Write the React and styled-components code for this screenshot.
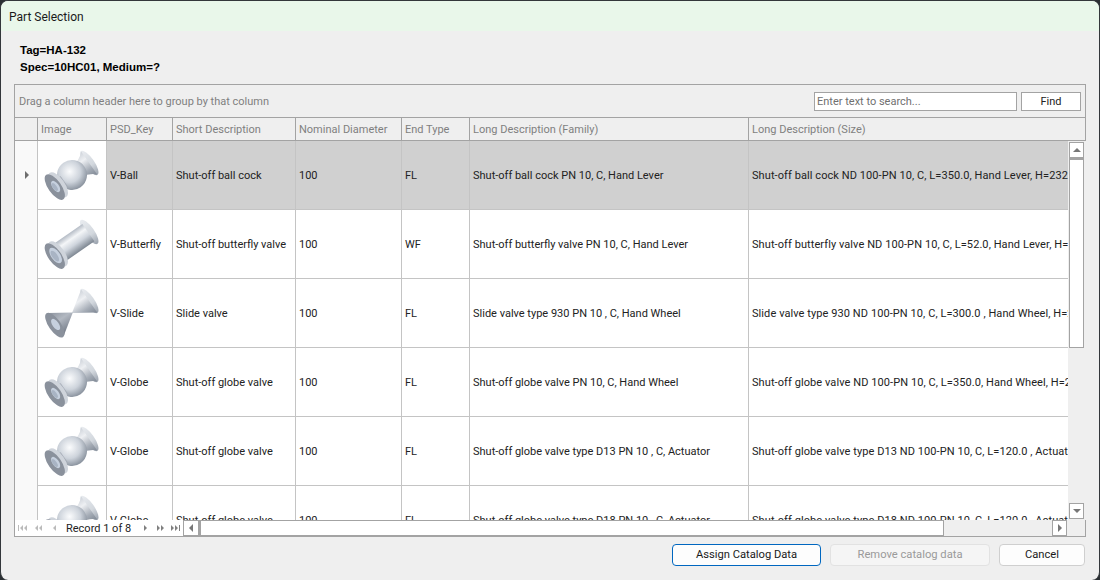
import React from "react"
import styled, { createGlobalStyle } from "styled-components"

const GlobalStyle = createGlobalStyle`
html, body {
  margin: 0;
  padding: 0;
  background: #2b2f33;
}
* { box-sizing: border-box; }
`

const Window = styled.div`
width: 1100px;
height: 580px;
background: #efefef;
border: 1px solid #33373b;
border-bottom: none;
border-radius: 8px;
overflow: hidden;
display: flex;
flex-direction: column;
font-family: Roboto, sans-serif;
font-size: 11px;
color: #222;
`

const TitleBar = styled.div`
height: 30px;
flex: none;
background: #e9f7ea;
display: flex;
align-items: center;
padding: 1px 0 0 8px;
font-size: 12px;
color: #1a1a1a;
`

const Info = styled.div`
flex: none;
height: 53px;
padding: 11px 0 0 19px;
font-family: "Liberation Sans", sans-serif;
font-weight: 700;
font-size: 11.5px;
line-height: 17px;
color: #000;
`

const GridBox = styled.div`
flex: none;
height: 453px;
margin: 0 13px;
border: 1px solid #a3a3a3;
display: flex;
flex-direction: column;
`

const GroupPanel = styled.div`
flex: none;
height: 33px;
border-bottom: 1px solid #a3a3a3;
display: flex;
align-items: center;
padding: 0 4px;
color: #7f7f7f;
`

const GroupHint = styled.span`
flex: 1;
`

const SearchInput = styled.div`
width: 203px;
height: 19px;
background: #fff;
border: 1px solid #a3a3a3;
color: #707070;
line-height: 18px;
padding-left: 2px;
`

const FindButton = styled.div`
width: 60px;
height: 19px;
margin-left: 4px;
background: #fff;
border: 1px solid #a3a3a3;
color: #222;
line-height: 18px;
text-align: center;
`

const columns = "23px 69px 66px 123px 106px 68px 279px 320px"

const HeaderRow = styled.div`
flex: none;
height: 23px;
display: grid;
grid-template-columns: ${columns};
border-bottom: 1px solid #a3a3a3;
color: #7f7f7f;
overflow: hidden;
`

const HeaderCell = styled.div`
border-right: ${({ $last }) => ($last ? "none" : "1px solid #a3a3a3")};
padding-left: 3px;
line-height: 24px;
white-space: nowrap;
`

const GridBody = styled.div`
flex: none;
height: 379px;
display: flex;
`

const Viewport = styled.div`
width: 1053px;
flex: none;
overflow: hidden;
`

const Row = styled.div`
height: 69px;
display: grid;
grid-template-columns: ${columns};
`

const Indicator = styled.div`
background: #f9f9f9;
border-right: 1px solid #c4c4c4;
display: flex;
align-items: center;
justify-content: center;
`

const Arrow = styled.div`
width: 0;
height: 0;
border-left: 4px solid #6e6e6e;
border-top: 4px solid transparent;
border-bottom: 4px solid transparent;
margin: 0 0 2px 1px;
`

const ImageCell = styled.div`
background: #fff;
border-right: 1px solid #c4c4c4;
border-bottom: 1px solid #c4c4c4;
`

const Cell = styled.div`
background: ${({ $selected }) => ($selected ? "#d0d0d0" : "#fff")};
border-right: ${({ $last }) => ($last ? "none" : "1px solid #c4c4c4")};
border-bottom: 1px solid #c4c4c4;
padding-left: 3px;
display: flex;
align-items: center;
white-space: nowrap;
overflow: hidden;
color: #222;
letter-spacing: ${({ $last }) => ($last ? "0.08px" : "0")};
`

const VScroll = styled.div`
flex: 1;
display: flex;
flex-direction: column;
padding: 1px 2px 1px 1px;
background: #efefef;
`

const ScrollBtn = styled.div`
flex: none;
width: ${({ $w }) => $w || 15}px;
height: 16px;
background: #fff;
border: 1px solid #a3a3a3;
display: flex;
align-items: center;
justify-content: center;
`

const VThumb = styled.div`
flex: none;
width: 15px;
height: 190px;
background: #fff;
border: 1px solid #a3a3a3;
border-top-width: 2px;
`

const VTrack = styled.div`
flex: 1;
`

const Tri = styled.div`
width: 0;
height: 0;
${({ $dir }) => $dir === "up" && "border-bottom: 4px solid #777; border-left: 4px solid transparent; border-right: 4px solid transparent;"}
${({ $dir }) => $dir === "down" && "border-top: 4px solid #777; border-left: 4px solid transparent; border-right: 4px solid transparent;"}
${({ $dir }) => $dir === "left" && "border-right: 4px solid #777; border-top: 4px solid transparent; border-bottom: 4px solid transparent;"}
${({ $dir }) => $dir === "right" && "border-left: 4px solid #777; border-top: 4px solid transparent; border-bottom: 4px solid transparent;"}
`

const BottomBar = styled.div`
flex: 1;
display: flex;
align-items: stretch;
background: #efefef;
`

const Navigator = styled.div`
width: 168px;
flex: none;
background: #fff;
display: flex;
align-items: center;
color: #222;
`

const NavIcon = styled.svg`
width: ${({ $w }) => $w}px;
height: 6px;
margin-left: ${({ $left }) => $left}px;
flex: none;
`

const RecordText = styled.span`
margin-left: 10px;
white-space: nowrap;
flex: none;
`

const HScroll = styled.div`
flex: 1;
display: flex;
align-items: center;
padding-right: 18px;
`

const HThumb = styled.div`
width: 745px;
height: 16px;
background: #fff;
border: 1px solid #a3a3a3;
border-left-width: 2px;
`

const HTrack = styled.div`
flex: 1;
`

const Footer = styled.div`
flex: none;
display: flex;
justify-content: flex-end;
gap: 9px;
margin: 7px 14px 0 0;
`

const Button = styled.div`
height: 22px;
width: ${({ $w }) => $w}px;
border-radius: 4px;
background: ${({ $disabled }) => ($disabled ? "#f5f5f5" : "#fdfdfd")};
border: 1px solid ${({ $primary, $disabled }) => ($primary ? "#0067c0" : $disabled ? "#e2e2e2" : "#cfcfcf")};
color: ${({ $disabled }) => ($disabled ? "#9a9a9a" : "#1a1a1a")};
font-size: 11.2px;
line-height: 20px;
text-align: center;
`

const Defs = () => (
  <svg width="0" height="0" style={{ position: "absolute" }}>
    <defs>
      <linearGradient id="body" x1="0" y1="0" x2="0" y2="1">
        <stop offset="0" stopColor="#b4bbc5" />
        <stop offset="0.28" stopColor="#f4f6f8" />
        <stop offset="0.6" stopColor="#cfd5dd" />
        <stop offset="1" stopColor="#7e8792" />
      </linearGradient>
      <linearGradient id="cone" x1="0" y1="0" x2="0" y2="1">
        <stop offset="0" stopColor="#cdd2d9" />
        <stop offset="0.3" stopColor="#eef0f3" />
        <stop offset="0.7" stopColor="#a5acb6" />
        <stop offset="1" stopColor="#7f8894" />
      </linearGradient>
      <linearGradient id="rim" x1="0" y1="0" x2="0" y2="1">
        <stop offset="0" stopColor="#e9ecf0" />
        <stop offset="0.6" stopColor="#d3d8de" />
        <stop offset="1" stopColor="#9aa2ad" />
      </linearGradient>
      <linearGradient id="leftCone" x1="0" y1="0" x2="0" y2="1">
        <stop offset="0" stopColor="#8b929d" />
        <stop offset="0.45" stopColor="#b2b8c1" />
        <stop offset="1" stopColor="#6f7783" />
      </linearGradient>
      <radialGradient id="ball" cx="0.5" cy="0.36" r="0.66">
        <stop offset="0" stopColor="#fbfcfd" />
        <stop offset="0.55" stopColor="#cdd3db" />
        <stop offset="1" stopColor="#828b97" />
      </radialGradient>
    </defs>
  </svg>
)

// flange at the near end of the valve, seen from the front
const NearFlange = ({ hole = 6.5 }) => (
  <>
    <ellipse cx="-17" cy="0" rx="6.5" ry="14.5" fill="#cfd4db" />
    <ellipse cx="-21" cy="0" rx="6.5" ry="15" fill="#8a919c" />
    <ellipse cx="-20" cy="0" rx={hole * 0.5} ry={hole} fill="#c6d0de" />
    <ellipse cx="-21" cy="0" rx={hole * 0.3} ry={hole * 0.7} fill="#a9b4c4" />
  </>
)

const FarFlange = () => (
  <ellipse cx="21" cy="0" rx="5" ry="14.5" fill="url(#rim)" />
)

const ValveSvg = styled.svg`
display: block;
width: 68px;
height: 68px;
`

const Valve = ({ kind }) => (
  <ValveSvg viewBox="0 0 68 68">
    <g transform="translate(34 34) rotate(-35)">
      {kind === "ball" && (
        <>
          <FarFlange />
          <path d="M6 -7 Q15 -8 21 -14 L21 14 Q15 8 6 7 Z" fill="url(#cone)" />
          <circle cx="0" cy="0" r="15" fill="url(#ball)" />
          <path d="M-16 -7 L-10 -5.5 L-10 7 L-16 8 Z" fill="#a3aab4" />
          <NearFlange />
        </>
      )}
      {kind === "butterfly" && (
        <>
          <FarFlange />
          <path d="M-16 -10.5 L20 -10.5 L20 10.5 L-16 10.5 Z" fill="url(#body)" />
          <NearFlange hole={9} />
        </>
      )}
      {kind === "slide" && (
        <>
          <FarFlange />
          <path d="M0 0 L21 -14 L21 14 Z" fill="url(#cone)" />
          <path d="M1 0 L-20 -14 L-20 14 Z" fill="url(#leftCone)" />
          <ellipse cx="-21" cy="0" rx="6" ry="14.5" fill="#8a919c" />
          <ellipse cx="-20" cy="0" rx="3.2" ry="6.5" fill="#c6d0de" />
        </>
      )}
    </g>
  </ValveSvg>
)

const first = "M0 0h1v6H0zM5 0v6L2 3zM9 0v6L6 3z"
const prevPage = "M3 0v6L0 3zM7 0v6L4 3z"
const prev = "M3 0v6L0 3z"
const next = "M0 0v6l3-3z"
const nextPage = "M0 0v6l3-3zM4 0v6l3-3z"
const last = "M0 0v6l3-3zM4 0v6l3-3zM8 0h1v6H8z"

const NavGlyph = ({ d, w, left, light }) => (
  <NavIcon viewBox={`0 0 ${w} 6`} $w={w} $left={left}>
    <path d={d} fill={light ? "#bbbbbb" : "#808080"} />
  </NavIcon>
)

const rows = [
  ["ball", "V-Ball", "Shut-off ball cock", "100", "FL", "Shut-off ball cock PN 10, C, Hand Lever", "Shut-off ball cock ND 100-PN 10, C, L=350.0, Hand Lever, H=232.0"],
  ["butterfly", "V-Butterfly", "Shut-off butterfly valve", "100", "WF", "Shut-off butterfly valve PN 10, C, Hand Lever", "Shut-off butterfly valve ND 100-PN 10, C, L=52.0, Hand Lever, H=232.0"],
  ["slide", "V-Slide", "Slide valve", "100", "FL", "Slide valve type 930 PN 10 , C, Hand Wheel", "Slide valve type 930 ND 100-PN 10, C, L=300.0 , Hand Wheel, H=232.0"],
  ["ball", "V-Globe", "Shut-off globe valve", "100", "FL", "Shut-off globe valve PN 10, C, Hand Wheel", "Shut-off globe valve ND 100-PN 10, C, L=350.0, Hand Wheel, H=232.0"],
  ["ball", "V-Globe", "Shut-off globe valve", "100", "FL", "Shut-off globe valve type D13 PN 10 , C, Actuator", "Shut-off globe valve type D13 ND 100-PN 10, C, L=120.0 , Actuator, H=232.0"],
  ["ball", "V-Globe", "Shut-off globe valve", "100", "FL", "Shut-off globe valve type D18 PN 10 , C, Actuator", "Shut-off globe valve type D18 ND 100-PN 10, C, L=120.0 , Actuator, H=232.0"],
]

const headers = ["", "Image", "PSD_Key", "Short Description", "Nominal Diameter", "End Type", "Long Description (Family)", "Long Description (Size)"]

const App = () => {
  return (
    <>
      <GlobalStyle />
      <Defs />
      <Window>
        <TitleBar>Part Selection</TitleBar>
        <Info>
          <div>Tag=HA-132</div>
          <div>Spec=10HC01, Medium=?</div>
        </Info>
        <GridBox>
          <GroupPanel>
            <GroupHint>Drag a column header here to group by that column</GroupHint>
            <SearchInput>Enter text to search...</SearchInput>
            <FindButton>Find</FindButton>
          </GroupPanel>
          <HeaderRow>
            {headers.map((h, i) => (
              <HeaderCell key={i} $last={i === headers.length - 1}>{h}</HeaderCell>
            ))}
          </HeaderRow>
          <GridBody>
            <Viewport>
              {rows.map((r, i) => (
                <Row key={i}>
                  <Indicator>{i === 0 && <Arrow />}</Indicator>
                  <ImageCell><Valve kind={r[0]} /></ImageCell>
                  {r.slice(1).map((text, j) => (
                    <Cell key={j} $selected={i === 0} $last={j === r.length - 2}>{text}</Cell>
                  ))}
                </Row>
              ))}
            </Viewport>
            <VScroll>
              <ScrollBtn><Tri $dir="up" /></ScrollBtn>
              <VThumb />
              <VTrack />
              <ScrollBtn><Tri $dir="down" /></ScrollBtn>
            </VScroll>
          </GridBody>
          <BottomBar>
            <Navigator>
              <NavGlyph d={first} w={9} left={3} light />
              <NavGlyph d={prevPage} w={7} left={8} light />
              <NavGlyph d={prev} w={3} left={11} light />
              <RecordText>Record 1 of 8</RecordText>
              <NavGlyph d={next} w={3} left={13} />
              <NavGlyph d={nextPage} w={7} left={10} />
              <NavGlyph d={last} w={9} left={7} />
            </Navigator>
            <HScroll>
              <ScrollBtn $w={16}><Tri $dir="left" /></ScrollBtn>
              <HThumb />
              <HTrack />
              <ScrollBtn><Tri $dir="right" /></ScrollBtn>
            </HScroll>
          </BottomBar>
        </GridBox>
        <Footer>
          <Button $w={149} $primary>Assign Catalog Data</Button>
          <Button $w={160} $disabled>Remove catalog data</Button>
          <Button $w={86}>Cancel</Button>
        </Footer>
      </Window>
    </>
  )
}

export default App
